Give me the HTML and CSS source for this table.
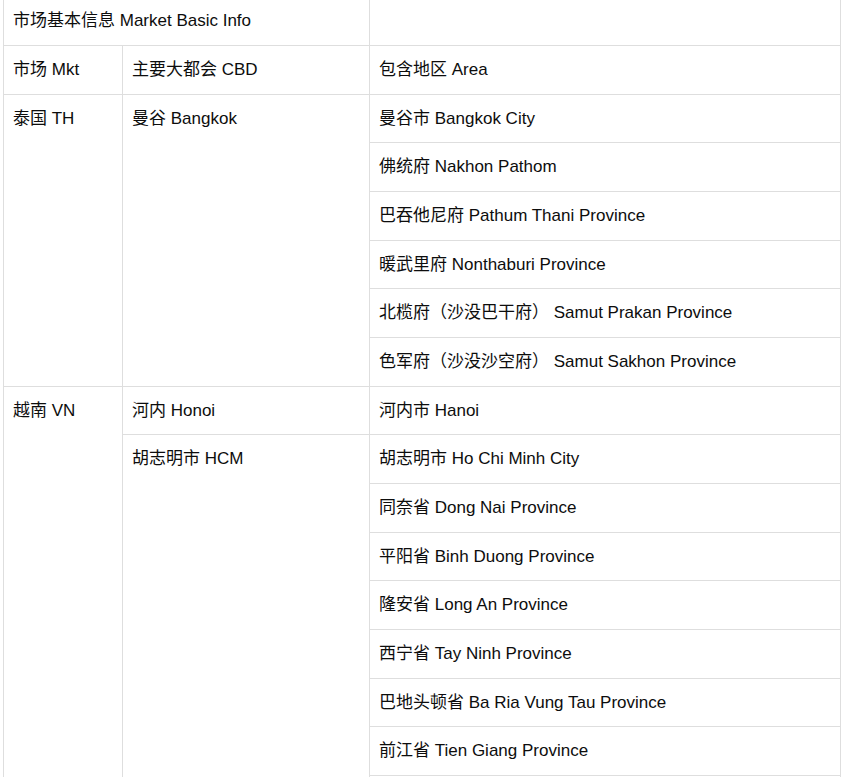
FILE: index.html
```html
<!DOCTYPE html>
<html lang="zh-CN">
<head>
<meta charset="utf-8">
<title>市场基本信息 Market Basic Info</title>
<link rel="stylesheet" href="styles.css">
</head>
<body>
<div class="page">
<table class="info">
  <colgroup>
    <col class="c1">
    <col class="c2">
    <col class="c3">
  </colgroup>
  <tbody>
    <tr><td colspan="2">市场基本信息 Market Basic Info</td><td></td></tr>
    <tr><td>市场 Mkt</td><td>主要大都会 CBD</td><td>包含地区 Area</td></tr>
    <tr><td rowspan="6">泰国 TH</td><td rowspan="6">曼谷 Bangkok</td><td>曼谷市 Bangkok City</td></tr>
    <tr><td>佛统府 Nakhon Pathom</td></tr>
    <tr><td>巴吞他尼府 Pathum Thani Province</td></tr>
    <tr><td>暖武里府 Nonthaburi Province</td></tr>
    <tr><td>北榄府（沙没巴干府） Samut Prakan Province</td></tr>
    <tr><td>色军府（沙没沙空府） Samut Sakhon Province</td></tr>
    <tr><td rowspan="9">越南 VN</td><td>河内 Honoi</td><td>河内市 Hanoi</td></tr>
    <tr><td rowspan="8">胡志明市 HCM</td><td>胡志明市 Ho Chi Minh City</td></tr>
    <tr><td>同奈省 Dong Nai Province</td></tr>
    <tr><td>平阳省 Binh Duong Province</td></tr>
    <tr><td>隆安省 Long An Province</td></tr>
    <tr><td>西宁省 Tay Ninh Province</td></tr>
    <tr><td>巴地头顿省 Ba Ria Vung Tau Province</td></tr>
    <tr><td>前江省 Tien Giang Province</td></tr>
    <tr><td>&nbsp;</td></tr>
  </tbody>
</table>
</div>
</body>
</html>
```

FILE: styles.css
```css
html, body {
  margin: 0;
  padding: 0;
  background: #ffffff;
}
.page {
  padding: 0 0 0 3px;
  margin-top: -3.67px;
}
.info {
  border-collapse: collapse;
  table-layout: fixed;
  width: 837px;
  font-family: "Liberation Sans", "Noto Sans CJK SC", sans-serif;
  font-size: 17px;
  color: #0d0d0d;
}
.c1 { width: 119px; }
.c2 { width: 247px; }
.c3 { width: 471px; }
.info td {
  border: 1px solid #dedede;
  padding: 11px 9px;
  line-height: 25.65px;
  vertical-align: top;
  text-align: left;
  white-space: nowrap;
}
```
